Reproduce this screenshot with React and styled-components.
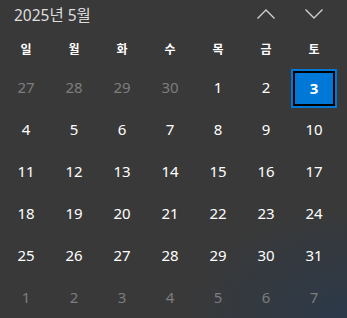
import React from 'react';
import styled, { createGlobalStyle } from 'styled-components';

const GlobalStyle = createGlobalStyle`
  body {
    margin: 0;
    background: #393939;
    font-family: "Noto Sans", "Noto Sans CJK KR", sans-serif;
  }
`;

const Panel = styled.div`
  width: 347px;
  height: 318px;
  overflow: hidden;
  background:
    radial-gradient(ellipse 160px 110px at 100% 100%, rgba(40, 58, 80, 0.75), rgba(40, 58, 80, 0) 100%),
    #393939;
  display: flex;
  flex-direction: column;
`;

const Header = styled.div`
  height: 36px;
  display: flex;
  align-items: center;
  padding: 0 9px 0 2px;
`;

const Title = styled.div`
  flex: 1;
  padding-left: 12px;
  font-size: 15.5px;
  color: #dedede;
  font-family: "Noto Sans", "Noto Sans CJK KR", sans-serif;
  margin-top: -2px;
`;

const NavButton = styled.button`
  width: 48px;
  height: 32px;
  border: none;
  background: transparent;
  padding: 0;
  display: flex;
  align-items: center;
  justify-content: center;
  margin-top: -2px;
`;

const Grid = styled.div`
  display: grid;
  grid-template-columns: repeat(7, 48px);
  padding: 0 2px;
`;

const WeekDay = styled.div`
  height: 36px;
  display: flex;
  align-items: center;
  justify-content: center;
  color: #ffffff;
  font-size: 12px;
  font-weight: 700;
  font-family: "Noto Sans CJK KR", sans-serif;
`;

const DayCell = styled.div`
  height: 42px;
  display: flex;
  align-items: center;
  justify-content: center;
  font-size: 15px;
  color: ${p => (p.$other ? '#7d7d7d' : '#ffffff')};
`;

const Selected = styled.div`
  width: 46px;
  height: 39px;
  box-sizing: border-box;
  margin-top: 2px;
  background: #0078d7;
  border: 2px solid #0078d7;
  box-shadow: inset 0 0 0 2px #000;
  display: flex;
  align-items: center;
  justify-content: center;
  color: #fff;
  font-weight: 700;
  font-size: 15px;
`;

const Chevron = ({ up }) => (
  <svg width="20" height="12" viewBox="0 0 20 12">
    <path
      d={up ? 'M1.5 10.5 L10 2 L18.5 10.5' : 'M1.5 1.5 L10 10 L18.5 1.5'}
      fill="none"
      stroke="#cfcfcf"
      strokeWidth="1.4"
    />
  </svg>
);

const weekDays = ['일', '월', '화', '수', '목', '금', '토'];

const days = [
  ...[27, 28, 29, 30].map(d => ({ d, other: true })),
  ...Array.from({ length: 31 }, (_, i) => ({ d: i + 1 })),
  ...[1, 2, 3, 4, 5, 6, 7].map(d => ({ d, other: true }))
];

export default function App() {
  return (
    <>
      <GlobalStyle />
      <Panel>
        <Header>
          <Title>2025년 5월</Title>
          <NavButton aria-label='이전'>
            <Chevron up />
          </NavButton>
          <NavButton aria-label='다음'>
            <Chevron />
          </NavButton>
        </Header>
        <Grid>
          {weekDays.map(w => (
            <WeekDay key={w}>{w}</WeekDay>
          ))}
          {days.map((item, i) => (
            <DayCell key={i} $other={item.other}>
              {!item.other && item.d === 3 ? <Selected>3</Selected> : item.d}
            </DayCell>
          ))}
        </Grid>
      </Panel>
    </>
  );
}
